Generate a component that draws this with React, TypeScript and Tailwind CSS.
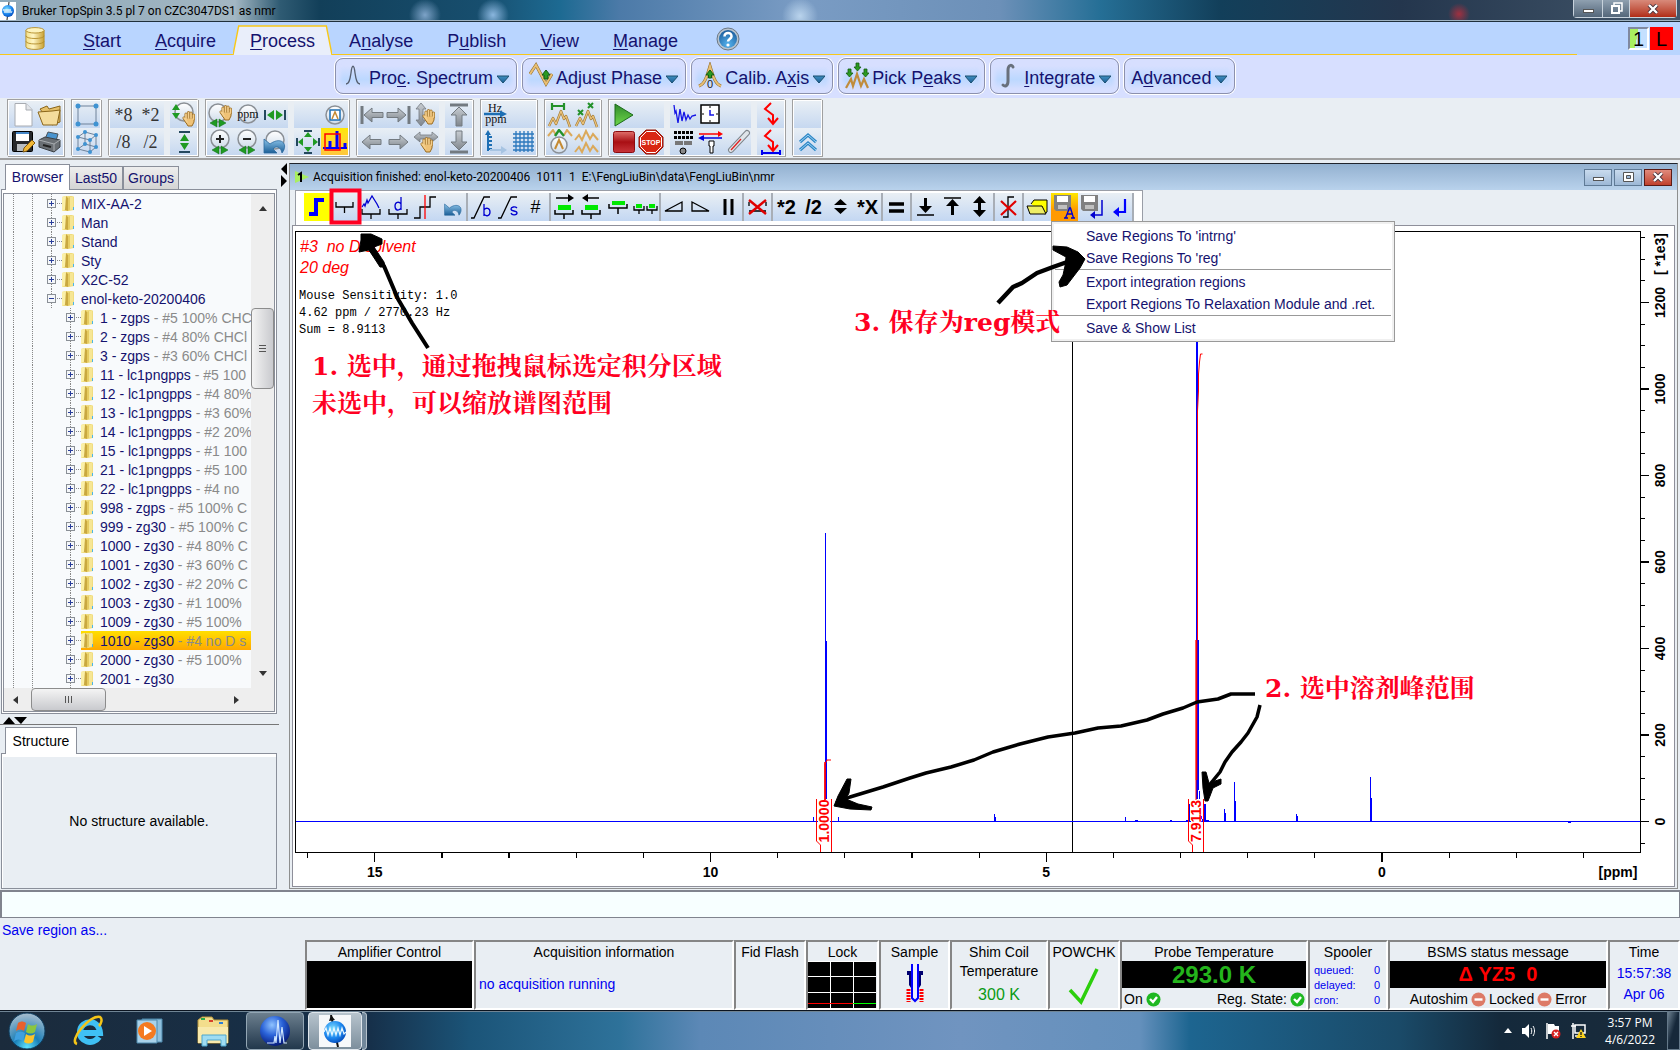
import type { ReactNode } from "react";
import clsx from "clsx";

const Svg = ({ children, w = 26, h = 26 }: any) => (
  <svg width={w} height={h} viewBox={`0 0 ${w} ${h}`} fill="none" className="shrink-0">
    {children}
  </svg>
);

const Defs = () => (
  <svg width="0" height="0" className="absolute" aria-hidden="true">
    <defs>
      <linearGradient id="gold" x1="0" x2="1" y1="0" y2="0">
        <stop offset="0" stopColor="#f3e08a" />
        <stop offset="0.4" stopColor="#fff6c4" />
        <stop offset="1" stopColor="#c9a133" />
      </linearGradient>
      <linearGradient id="lens" x1="0" x2="0" y1="0" y2="1">
        <stop offset="0" stopColor="#ffffff" />
        <stop offset="1" stopColor="#cfdcea" />
      </linearGradient>
      <linearGradient id="steel" x1="0" x2="0" y1="0" y2="1">
        <stop offset="0" stopColor="#c8cdd2" />
        <stop offset="1" stopColor="#7f868d" />
      </linearGradient>
      <linearGradient id="blueArrow" x1="0" x2="0" y1="0" y2="1">
        <stop offset="0" stopColor="#8cc4ea" />
        <stop offset="1" stopColor="#1c5f97" />
      </linearGradient>
      <linearGradient id="caret" x1="0" x2="0" y1="0" y2="1">
        <stop offset="0" stopColor="#3d8fc0" />
        <stop offset="1" stopColor="#1c5f97" />
      </linearGradient>
      <linearGradient id="playGreen" x1="0" x2="0" y1="0" y2="1">
        <stop offset="0" stopColor="#2f8a2c" />
        <stop offset="1" stopColor="#6fd84b" />
      </linearGradient>
      <linearGradient id="stopRed" x1="0" x2="0" y1="0" y2="1">
        <stop offset="0" stopColor="#e0706c" />
        <stop offset="0.5" stopColor="#a90f14" />
        <stop offset="1" stopColor="#c8353a" />
      </linearGradient>
      <radialGradient id="ball" cx="0.4" cy="0.3" r="0.7">
        <stop offset="0" stopColor="#8fc3ff" />
        <stop offset="0.5" stopColor="#2a62d8" />
        <stop offset="1" stopColor="#071d7c" />
      </radialGradient>
      <radialGradient id="cyanBall" cx="0.4" cy="0.35" r="0.7">
        <stop offset="0" stopColor="#7fe0ff" />
        <stop offset="0.6" stopColor="#1c86ee" />
        <stop offset="1" stopColor="#0448b8" />
      </radialGradient>
      <radialGradient id="help" cx="0.5" cy="0.8" r="0.8">
        <stop offset="0" stopColor="#56b4ee" />
        <stop offset="1" stopColor="#1b5c9c" />
      </radialGradient>
      <radialGradient id="orb" cx="0.5" cy="0.95" r="0.9">
        <stop offset="0" stopColor="#5fe4ff" />
        <stop offset="0.4" stopColor="#1a7fb8" />
        <stop offset="1" stopColor="#9fb9cc" />
      </radialGradient>
    </defs>
  </svg>
);

const Hand = ({ x, y }: { x: number; y: number }) => (
  <g transform={`translate(${x} ${y})`} strokeLinecap="round" strokeLinejoin="round">
    <path d="M3 8V3M5.500 7V1.500M8 7V2M10.500 8V4M1 7l3 4" stroke="#9a6c22" strokeWidth="3" />
    <path d="M3 7h8v4l-2 4H5l-3-5z" fill="#efc277" stroke="#9a6c22" />
    <path d="M3 8V3M5.500 7V1.500M8 7V2M10.500 8V4M1 7l3 4" stroke="#f4cf8d" strokeWidth="1.700" />
  </g>
);
const Lens = ({ cx = 12, cy = 12, r = 8 }) => (
  <circle cx={cx} cy={cy} r={r} fill="url(#lens)" stroke="#8b9096" strokeWidth="1.500" />
);
const GreenH = ({ x = 12, y = 22 }) => (
  <path d={`M${x - 1} ${y - 4}v8l-7-4zM${x + 1} ${y - 4}v8l7-4z`} fill="#1f9a22" stroke="#0f6a14" strokeWidth="0.500" />
);
const SteelArrow = ({ t = "" }) => (
  <path d="M2 13l8-7v4.500h11v5H10V20z" transform={t} fill="url(#steel)" stroke="#737a80" />
);
const Zigzag = ({ y = 0 }) => (
  <g strokeLinejoin="round">
    <path d={`M2 ${22 + y}l4-8 3 6 5-13 3 8 2-3 4 11`} stroke="#9c7430" strokeWidth="2.400" />
    <path d={`M2 ${22 + y}l4-8 3 6 5-13 3 8 2-3 4 11`} stroke="#eac27a" strokeWidth="1.300" />
  </g>
);

const NewFile = () => (
  <Svg>
    <path d="M5 1.500h11l6 6V24H5z" fill="#fff" stroke="#a8acb2" />
    <path d="M16 1.500V8h6" fill="#e3e6ea" stroke="#a8acb2" />
  </Svg>
);
const OpenFile = () => (
  <Svg>
    <path d="M3 7l7-3 2 3 11-3v16l-8 3z" fill="#e5c069" stroke="#8a6519" />
    <path d="M1 10l14-1 8-1-3 15-14 0z" fill="#f4dc9c" stroke="#8a6519" />
  </Svg>
);
const SaveFile = () => (
  <Svg>
    <rect x="2.500" y="2.500" width="20" height="20" rx="1" fill="#25282c" stroke="#000" />
    <rect x="6" y="3" width="13" height="9" fill="#fff" />
    <path d="M6 4h13" stroke="#4587c8" strokeWidth="2" />
    <rect x="7" y="15" width="10" height="7" fill="#b8bdc2" />
    <path d="M13 23l1-4 8-8 3 3-8 8z" fill="#f0b838" stroke="#7d5712" />
  </Svg>
);
const Print = () => (
  <Svg>
    <path d="M8 10l3-7 10 2-2 7z" fill="#4994cf" stroke="#4c5359" />
    <path d="M2 11l6-3 15 3v7l-6 5-15-5z" fill="#6a6f74" stroke="#3c4044" />
    <path d="M2 11l15 4 6-4M17 15v7" stroke="#a9adb1" />
    <path d="M6 16l8 2" stroke="#222" strokeWidth="2" />
  </Svg>
);
const Square2D = () => (
  <Svg>
    <rect x="4" y="4" width="18" height="18" stroke="#6e8299" />
    {[[4, 4], [22, 4], [4, 22], [22, 22]].map(([x, y]) => (
      <circle key={`${x}-${y}`} cx={x} cy={y} r="2.500" fill="#3f93d2" />
    ))}
  </Svg>
);
const Cube3D = () => (
  <Svg>
    <path d="M4 8l12 3v12L4 20zM4 8l7-5 11 3-6 5M22 6v12l-6 5M11 3v12l11 3M11 15l-7 5" stroke="#6e8299" />
    {[[4, 8], [16, 11], [16, 23], [4, 20], [11, 3], [22, 6], [22, 18], [11, 15]].map(([x, y]) => (
      <circle key={`${x}-${y}`} cx={x} cy={y} r="2" fill="#3f93d2" />
    ))}
  </Svg>
);
const HandScale = () => (
  <Svg>
    <Lens cx={13} cy={10} r={9} />
    <path d="M1 8h8L5 2zM1 11h8l-4 6z" fill="#1f9a22" />
    <Hand x={12} y={9} />
  </Svg>
);
const FitV = () => (
  <Svg>
    <path d="M8 3h11M8 23h11" stroke="#24485e" strokeWidth="2" />
    <path d="M9 12h9l-4.500-7zM9 14h9l-4.500 7z" fill="#1f9a22" />
  </Svg>
);
const LensHand = () => (
  <Svg>
    <Lens cx={10} cy={11} r={9} />
    <GreenH x={10} y={21} />
    <Hand x={12} y={3} />
  </Svg>
);
const LensPpm = () => (
  <Svg>
    <Lens cx={13} cy={12} r={9} />
    <text x="13" y="16" textAnchor="middle" fontSize="12" fill="#111" fontFamily="Liberation Serif, serif">ppm</text>
  </Svg>
);
const FitH = () => (
  <Svg>
    <path d="M3 8v10M23 8v10" stroke="#24485e" strokeWidth="2" />
    <path d="M12 8v10l-7-5zM14 8v10l7-5z" fill="#1f9a22" />
  </Svg>
);
const LensPlus = () => (
  <Svg>
    <Lens cx={12} cy={10} r={9} />
    <path d="M8 10h8M12 6v8" stroke="#222" strokeWidth="2" />
    <GreenH x={12} y={21} />
  </Svg>
);
const LensMinus = () => (
  <Svg>
    <Lens cx={12} cy={10} r={9} />
    <path d="M8 10h8" stroke="#222" strokeWidth="2" />
    <GreenH x={12} y={21} />
  </Svg>
);
const UndoArrow = () => (
  <path d="M2 10v14h13l-4-4c3-4 8-2 9 4 7-9-1-17-12-9z" fill="url(#blueArrow)" stroke="#2b6a9e" strokeWidth="0.800" />
);
const LensUndo = () => (
  <Svg>
    <Lens cx={13} cy={11} r={9} />
    <UndoArrow />
  </Svg>
);
const LensPeak = () => (
  <Svg>
    <Lens cx={13} cy={13} r={9} />
    <rect x="8" y="8" width="10" height="10" fill="#fff" stroke="#1d6fb4" strokeWidth="1.500" />
    <path d="M10 17l3-7 3 7" stroke="#c58b34" strokeWidth="1.500" />
  </Svg>
);
const FitAll = () => (
  <Svg>
    <path d="M9 2h8M9 24h8M2 9v8M24 9v8" stroke="#24485e" strokeWidth="2" />
    <path d="M9 8h8l-4-5zM9 18h8l-4 5zM8 9v8l-5-4zM18 9v8l5-4z" fill="#1f9a22" />
  </Svg>
);
const BarsIcon = () => (
  <Svg>
    <path d="M1 19h24" stroke="#0000ff" strokeWidth="2" />
    <path d="M8 19v-7M15 19V2M23 19v-5" stroke="#0000ff" strokeWidth="3" />
    <rect x="3" y="5" width="15" height="16" stroke="#ff0000" strokeWidth="1.500" />
  </Svg>
);
const ArrowLeftEnd = () => (
  <Svg>
    <path d="M3 4v18" stroke="#737a80" strokeWidth="3" />
    <SteelArrow t="translate(3 0)" />
  </Svg>
);
const ArrowRightEnd = () => (
  <Svg>
    <path d="M23 4v18" stroke="#737a80" strokeWidth="3" />
    <SteelArrow t="translate(22 0) scale(-1 1)" />
  </Svg>
);
const ArrowLeft = () => (
  <Svg>
    <SteelArrow t="translate(1 0)" />
  </Svg>
);
const ArrowRight = () => (
  <Svg>
    <SteelArrow t="translate(24 0) scale(-1 1)" />
  </Svg>
);
const HandV = () => (
  <Svg>
    <path d="M8 1l5 6h-3v11h3l-5 6-5-6h3V7H3z" fill="url(#steel)" stroke="#737a80" strokeWidth="0.800" />
    <Hand x={10} y={7} />
  </Svg>
);
const HandH = () => (
  <Svg>
    <path d="M1 8l6-5v3h12V3l6 5-6 5v-3H7v3z" fill="url(#steel)" stroke="#737a80" strokeWidth="0.800" />
    <Hand x={8} y={8} />
  </Svg>
);
const ArrowUpEnd = () => (
  <Svg>
    <path d="M4 3h18" stroke="#737a80" strokeWidth="3" />
    <path d="M13 5l8 8h-5v11h-6V13H5z" fill="url(#steel)" stroke="#737a80" />
  </Svg>
);
const ArrowDownEnd = () => (
  <Svg>
    <path d="M4 23h18" stroke="#737a80" strokeWidth="3" />
    <path d="M13 21l8-8h-5V2h-6v11H5z" fill="url(#steel)" stroke="#737a80" />
  </Svg>
);
const HzPpm = () => (
  <Svg>
    <text x="12" y="10" textAnchor="middle" fontSize="12" fill="#111" fontFamily="Liberation Serif, serif">Hz</text>
    <path d="M1 12h17" stroke="#1d6fb4" strokeWidth="2.500" />
    <path d="M17 8.500l7 3.500-7 3.500z" fill="#1d6fb4" />
    <text x="13" y="21" textAnchor="middle" fontSize="12" fill="#111" fontFamily="Liberation Serif, serif">ppm</text>
  </Svg>
);
const AxisIcon = () => (
  <Svg>
    <path d="M5 22V4M5 8h4M5 12h4M5 16h4M5 20h4" stroke="#1d6fb4" strokeWidth="2" />
    <path d="M2 6l3-5 3 5z" fill="#1d6fb4" />
    <path d="M7 21h12" stroke="#a7c4e2" strokeWidth="2" />
    <path d="M18 17l6 4-6 4z" fill="#a7c4e2" />
  </Svg>
);
const GridIcon = () => (
  <Svg>
    <path d="M6 2v21M10 2v21M14 2v21M18 2v21M22 2v21M3 5h21M3 9h21M3 13h21M3 17h21M3 21h21" stroke="#2b78bd" strokeWidth="1.300" />
  </Svg>
);
const PeakRange = () => (
  <Svg>
    <path d="M5 1v7M17 1v7M5 4h12" stroke="#23912a" strokeWidth="2.200" />
    <Zigzag y={2} />
  </Svg>
);
const PeakMarks = () => (
  <Svg>
    <path d="M4 8l5 5M9 8l-5 5M14 1l5 5M19 1l-5 5" stroke="#23912a" strokeWidth="2" />
    <Zigzag y={2} />
  </Svg>
);
const PeakLens = () => (
  <Svg>
    <path d="M1 7l5-6 3 5" stroke="#dba95a" strokeWidth="2" />
    <path d="M17 6l3-5 5 6" stroke="#dba95a" strokeWidth="2" />
    <path d="M8 7l4-6 5 6" stroke="#23912a" strokeWidth="2.400" />
    <Lens cx={12} cy={16} r={8} />
    <path d="M8 20l4-9 4 9" stroke="#c58b34" strokeWidth="2" />
  </Svg>
);
const PeakDouble = () => (
  <Svg>
    <path d="M1 11l4-5 3 5 4-9 4 8 3-5 5 6" stroke="#dba95a" strokeWidth="2" />
    <path d="M1 23l4-5 3 5 4-9 4 8 3-5 5 6" stroke="#dba95a" strokeWidth="2" />
  </Svg>
);
const Play = () => (
  <Svg>
    <path d="M4 2l18 11L4 24z" fill="url(#playGreen)" stroke="#1b6b1a" />
  </Svg>
);
const StopSquare = () => (
  <Svg>
    <rect x="2.500" y="2.500" width="21" height="21" rx="2" fill="url(#stopRed)" stroke="#8b0b10" />
  </Svg>
);
const StopSign = () => (
  <Svg>
    <path d="M8 1h10l7 7v10l-7 7H8l-7-7V8z" fill="#d92713" stroke="#8d1408" />
    <path d="M8.500 2.500h9l6 6v9l-6 6h-9l-6-6v-9z" stroke="#fff" />
    <text x="13" y="16" textAnchor="middle" fontSize="7" fontWeight="bold" fill="#fff" fontFamily="Liberation Sans, sans-serif">STOP</text>
  </Svg>
);
const Fid = () => (
  <Svg>
    <path d="M3 3l1 8 1-2 2 12 2-14 2 12 2-9 2 8 2-5 2 4 2-3 4-1" stroke="#1414e6" strokeWidth="1.300" />
  </Svg>
);
const Clock = () => (
  <Svg>
    <rect x="3" y="3" width="18" height="18" fill="#fff" stroke="#000" strokeWidth="1.500" />
    <path d="M12 8v5h4" stroke="#1414e6" strokeWidth="1.500" />
    <path d="M12 4v2M12 18v2M4 12h2M18 12h2" stroke="#000" />
  </Svg>
);
const Keyboard = () => (
  <Svg>
    <path d="M3 3.500h19M3 8.500h19" stroke="#000" strokeWidth="3" strokeDasharray="3 1" />
    <path d="M4 14h8M13 14h8" stroke="#777" strokeWidth="4" />
    <circle cx="12" cy="22" r="3" fill="#888" stroke="#000" />
  </Svg>
);
const Swap = () => (
  <Svg>
    <path d="M5 9h19" stroke="#0000e0" strokeWidth="1.500" />
    <path d="M1 5h20" stroke="#f00" strokeWidth="1.500" />
    <path d="M20 2l5 3-5 3z" fill="#f00" />
    <path d="M6 6L0 9l6 3z" fill="#0000e0" />
    <path d="M11 12h5v5h-1v7h-3v-7h-1z" fill="#fff" stroke="#000" />
  </Svg>
);
const Thermo = () => (
  <Svg>
    <path d="M22 4L6 21" stroke="#7d848b" strokeWidth="6" strokeLinecap="round" />
    <path d="M22 4L6 21" stroke="#dfe4e9" strokeWidth="4" strokeLinecap="round" />
    <path d="M16 10L6 21" stroke="#e02020" strokeWidth="1.300" />
  </Svg>
);
const RedDown = ({ line = false }) => (
  <Svg>
    <path d="M13 1l-6 6 8 6v8" stroke="#f00" strokeWidth="2" />
    <path d="M10 16l5 6 5-6" stroke="#f00" strokeWidth="2" />
    {line && <path d="M3 24h20M4 21v5M22 21v5" stroke="#0000f0" strokeWidth="2" />}
  </Svg>
);
const ChevronsUp = () => (
  <Svg>
    <path d="M5 13l8-7 8 7M5 21l8-7 8 7" stroke="#2b86c6" strokeWidth="3" />
    <path d="M5 13l8-7 8 7M5 21l8-7 8 7" stroke="#9fd3f2" strokeWidth="1" />
  </Svg>
);

const scale = (s: string) => <span className="font-['Liberation_Serif',serif] text-lg text-[#333]">{s}</span>;

// each group is a list of blocks, each block a top and a bottom row of [label, icon]
type Tool = [string, ReactNode] | null;
const toolGroups: Tool[][][][] = [
  [[[["New", <NewFile />], ["Open", <OpenFile />]], [["Save", <SaveFile />], ["Print", <Print />]]]],
  [[[["2D", <Square2D />]], [["3D", <Cube3D />]]]],
  [
    [[["Times 8", scale("*8")], ["Times 2", scale("*2")]], [["Divide by 8", scale("/8")], ["Divide by 2", scale("/2")]]],
    [[["Scale", <HandScale />]], [["Fit vertically", <FitV />]]],
  ],
  [
    [
      [["Zoom", <LensHand />], ["Exact zoom", <LensPpm />], ["Full width", <FitH />]],
      [["Zoom in", <LensPlus />], ["Zoom out", <LensMinus />], ["Undo zoom", <LensUndo />]],
    ],
    [[null, ["Overview", <LensPeak />]], [["Full size", <FitAll />], ["Keep region", <BarsIcon />]]],
  ],
  [
    [
      [["Left edge", <ArrowLeftEnd />], ["Right edge", <ArrowRightEnd />], ["Drag vertically", <HandV />]],
      [["Left", <ArrowLeft />], ["Right", <ArrowRight />], ["Drag horizontally", <HandH />]],
    ],
    [[["Top", <ArrowUpEnd />]], [["Bottom", <ArrowDownEnd />]]],
  ],
  [[[["Units", <HzPpm />], null], [["Axis", <AxisIcon />], ["Grid", <GridIcon />]]]],
  [[[["Peak range", <PeakRange />], ["Peak marks", <PeakMarks />]], [["Peak zoom", <PeakLens />], ["Multiple display", <PeakDouble />]]]],
  [
    [[["Run", <Play />], null], [["Halt", <StopSquare />], ["Stop", <StopSign />]]],
    [
      [["Fid", <Fid />], ["Clock", <Clock />], null],
      [["Bsms", <Keyboard />], ["Sample changer", <Swap />], ["Temperature", <Thermo />]],
    ],
    [[["Inject", <RedDown />]], [["Eject", <RedDown line />]]],
  ],
  [[[null], [["Collapse", <ChevronsUp />]]]],
];

const MainToolbar = () => (
  <div className="flex gap-[7px] h-[60px] pt-px pl-[7px] bg-[#e9eef3]">
    {toolGroups.map((blocks, g) => (
      <div key={g} className="flex gap-[6px] h-[57px] border border-[#a0a0a0] border-b-white border-r-white bg-[#e9eef3] pt-px pl-px shadow-[inset_1px_1px_0_white,1px_1px_0_#a0a0a0]">
        {blocks.map((rows, b) => (
          <div key={b}>
            {rows.map((row, r) => (
              <div key={r} className="flex h-[27px] bg-linear-to-b from-[#e9eff5] to-[#c6d8f0]">
                {row.map((tool, t) =>
                  tool ? (
                    <button
                      key={t}
                      aria-label={tool[0]}
                      className={clsx(
                        "flex w-[27px] h-[27px] items-center justify-center",
                        tool[0] === "Keep region" && "bg-linear-to-b from-[#ffe600] to-[#ffc83c]"
                      )}
                    >
                      {tool[1]}
                    </button>
                  ) : (
                    <span key={t} className="w-[27px]" />
                  )
                )}
              </div>
            ))}
          </div>
        ))}
      </div>
    ))}
  </div>
);

const TitleBar = () => (
  <header className="relative flex h-[22px] items-center border-b border-[#20303c] shadow-[inset_0_-1px_0_#9fb3c2] bg-[radial-gradient(circle_at_425px_15px,#7da3c8_0,transparent_16px),radial-gradient(circle_at_493px_15px,#8ab6de_0,transparent_16px),radial-gradient(circle_at_800px_16px,#b9d3ec_0,transparent_18px),radial-gradient(circle_at_1459px_14px,#a03040_0,transparent_11px),linear-gradient(90deg,#8fa9ba_0,#a3b7c3_235px,#2f5b73_280px,#123f59_320px,#174e6e_480px,#1d6a92_560px,#4c7aa8_620px,#7a9cc4_800px,#6c90b8_1000px,#256f96_1100px,#123f5a_1220px,#24364d_1400px,#42566a_100%)]">
    <svg width="16" height="18" viewBox="0 0 16 18" className="bg-white">
      <path d="M9 0L7 18" stroke="#222" />
      <circle cx="8" cy="9" r="6" fill="url(#cyanBall)" />
      <path d="M3 9l1-2 1 4 1-4 1 4 1-4 1 4 1-4 1 4 1-2" stroke="#fff" strokeWidth="0.700" fill="none" />
    </svg>
    <h1 className="pl-[6px] font-['Roboto',sans-serif] text-xs text-black">Bruker TopSpin 3.5 pl 7 on CZC3047DS1 as nmr</h1>
    <div className="ml-auto mr-[3px] flex self-start h-[18px] rounded-b border border-t-0 border-[#c7d2dc]">
      <button aria-label="Minimize" className="w-[29px] flex items-end justify-center pb-[4px] bg-linear-to-b from-[#8fa0b0] to-[#54677a] border-r border-[#c7d2dc]">
        <span className="w-[11px] h-[4px] bg-white border border-[#555]" />
      </button>
      <button aria-label="Restore" className="w-[27px] flex items-center justify-center bg-linear-to-b from-[#8fa0b0] to-[#54677a] border-r border-[#c7d2dc]">
        <svg width="13" height="13" viewBox="0 0 13 13" fill="none">
          <path d="M4 3V1h8v8h-2" stroke="#fff" strokeWidth="1.500" />
          <rect x="2" y="4" width="7" height="7" stroke="#fff" strokeWidth="2" />
        </svg>
      </button>
      <button aria-label="Close" className="w-[46px] flex items-center justify-center bg-linear-to-b from-[#d88a7a] to-[#b02a14]">
        <CloseX />
      </button>
    </div>
  </header>
);

const CloseX = () => (
  <svg width="12" height="10" viewBox="0 0 12 10" fill="none">
    <path d="M2 1l8 8M10 1L2 9" stroke="#45303a" strokeWidth="4" />
    <path d="M2 1l8 8M10 1L2 9" stroke="#fff" strokeWidth="2.400" />
  </svg>
);

const menus = [["", "S", "tart"], ["", "A", "cquire"], ["", "P", "rocess"], ["A", "n", "alyse"], ["P", "u", "blish"], ["", "V", "iew"], ["", "M", "anage"]];

const MenuBar = () => (
  <nav className="flex h-[33px] bg-[#b9d5ff] text-lg text-[#15126e]">
    <div className="flex flex-1 border-b border-[#f8c818]">
      <button aria-label="Data" className="ml-[25px] w-[20px] pt-px">
        <svg width="20" height="25" viewBox="0 0 22 26">
          <path d="M1 4v18c0 4 20 4 20 0V4" fill="url(#gold)" stroke="#b38d2a" />
          <ellipse cx="11" cy="4" rx="10" ry="3" fill="#fdf3bd" stroke="#b38d2a" />
          <path d="M1 10c0 4 20 4 20 0M1 16c0 4 20 4 20 0" fill="none" stroke="#b38d2a" />
        </svg>
      </button>
      <div className="flex pl-[21px]">
        {menus.map(([a, u, b]) => (
          <button key={u + b} className="relative px-[17px] pt-[5px]">
            {b === "rocess" && (
              <svg className="absolute inset-x-0 -bottom-px h-[30px] w-full" viewBox="0 0 105 30" preserveAspectRatio="none">
                <path d="M0 30L6 1h93l6 29" fill="#e9eefa" stroke="#f8c818" strokeWidth="1.500" />
              </svg>
            )}
            <span className="relative">
              {a}
              <u className="underline-offset-2">{u}</u>
              {b}
            </span>
          </button>
        ))}
      </div>
      <button aria-label="Help" className="ml-[21px] pt-px">
        <svg width="24" height="24" viewBox="0 0 24 24">
          <circle cx="12" cy="12" r="11" fill="#b7c3cf" stroke="#6c7884" />
          <circle cx="12" cy="12" r="9" fill="url(#help)" />
          <path d="M8.500 9.500c0-5 7.500-4.500 7 0-.3 2.500-3.500 2.500-3.500 5" fill="none" stroke="#fff" strokeWidth="2.500" />
          <circle cx="12" cy="18" r="1.600" fill="#fff" />
        </svg>
      </button>
    </div>
    <div className="flex w-[103px] items-center justify-end gap-px pr-[7px] text-xl text-black">
      <span className="flex h-[23px] w-[21px] items-center justify-center border-2 border-[#8089a0] border-b-white border-r-white bg-[linear-gradient(100deg,#a9ef60_0,#a9ef60_40%,#c4e0ff_42%)]">1</span>
      <span className="flex h-[23px] w-[23px] items-center justify-center bg-[#ff0000]">L</span>
    </div>
  </nav>
);

const actions: [string, string, string, ReactNode][] = [
  ["Pro", "c", ". Spectrum", <Svg w={24} h={28}><path d="M4 22c3 0 4-4 5-11 1-9 3-9 4 0 1 7 2 11 5 11" stroke="#555f70" strokeWidth="1.300" /></Svg>],
  ["Ad", "j", "ust Phase", <Svg w={24} h={28}>
    <path d="M1 12l6-9 10 19 6-10" stroke="#8e6a28" strokeWidth="3" />
    <path d="M1 12l6-9 10 19 6-10" stroke="#e9bf74" strokeWidth="2" />
    <path d="M17 8l4 5h-2v4h-4v-4h-2z" fill="#2a9a22" stroke="#145c12" />
  </Svg>],
  ["Calib. A", "x", "is", <Svg w={24} h={28}>
    <path d="M1 24c6-2 8-10 11-20 3 10 5 18 11 20" stroke="#8e6a28" strokeWidth="3" />
    <path d="M1 24c6-2 8-10 11-20 3 10 5 18 11 20" stroke="#e9bf74" strokeWidth="2" />
    <path d="M12 8l4 5h-2.500v3h-3v-3H8z" fill="#2a9a22" stroke="#145c12" />
    <text x="12" y="26" textAnchor="middle" fontSize="11" fill="#222">0</text>
  </Svg>],
  ["Pick P", "e", "aks", <Svg w={24} h={28}>
    <path d="M1 26l5-9 2 7 4-12 4 12 3-7 4 9" stroke="#c08c3c" strokeWidth="2.200" />
    {[[4, 9], [12, 3], [20, 9]].map(([x, y]) => (
      <path key={x} d={`M${x - 1} ${y - 2}h3v4h2l-3.500 4-3.500-4h2z`} fill="#2a9a22" stroke="#145c12" strokeWidth="0.800" />
    ))}
  </Svg>],
  ["", "I", "ntegrate", <Svg w={24} h={28}><path d="M16 5c-1-3-5-2-5 3v11c0 5-3 6-5 4" stroke="#68707c" strokeWidth="3" strokeLinecap="round" /></Svg>],
  ["A", "d", "vanced", null],
];

const ActionBar = () => (
  <div className="flex h-[43px] gap-[5px] bg-[#d7dfff] pl-[335px] pt-[3px] text-lg text-[#15126e]">
    {actions.map(([a, u, b, icon]) => (
      <button key={b} className="flex h-[36px] items-center whitespace-nowrap rounded-lg border border-[#8c91ad] bg-[linear-gradient(180deg,#d7dfff_20%,#bcd8ff_60%,#d7dfff_92%)] px-[6px] shadow-[0_0_0_1px_white,inset_0_0_4px_4px_#d7dfff]">
        {icon && <span className="mr-[3px]">{icon}</span>}
        <span className="pt-[3px]">
          {a}
          <u className="underline-offset-2">{u}</u>
          {b}
        </span>
        <svg width="12" height="8" viewBox="0 0 12 8" className="ml-[4px] mr-px mt-[5px]">
          <path d="M0 1h12L6 8z" fill="url(#caret)" stroke="#1a4f6e" />
        </svg>
      </button>
    ))}
  </div>
);

const folders = ["MIX-AA-2", "Man", "Stand", "Sty", "X2C-52", "enol-keto-20200406"];
const experiments = [
  ["1 - zgps", "#5 100% CHC"],
  ["2 - zgps", "#4 80% CHCl"],
  ["3 - zgps", "#3 60% CHCl"],
  ["11 - lc1pngpps", "#5 100"],
  ["12 - lc1pngpps", "#4 80%"],
  ["13 - lc1pngpps", "#3 60%"],
  ["14 - lc1pngpps", "#2 20%"],
  ["15 - lc1pngpps", "#1 100"],
  ["21 - lc1pngpps", "#5 100"],
  ["22 - lc1pngpps", "#4 no"],
  ["998 - zgps", "#5 100% C"],
  ["999 - zg30", "#5 100% C"],
  ["1000 - zg30", "#4 80% C"],
  ["1001 - zg30", "#3 60% C"],
  ["1002 - zg30", "#2 20% C"],
  ["1003 - zg30", "#1 100%"],
  ["1009 - zg30", "#5 100%"],
  ["1010 - zg30", "#4 no D s"],
  ["2000 - zg30", "#5 100%"],
  ["2001 - zg30", ""],
];

const Folder = () => (
  <svg width="13" height="17" viewBox="1 0 13 17" className="shrink-0">
    <path d="M1 2l3-1h8l1 1v13l-5 1H1z" fill="#f0dc80" />
    <path d="M1 2l4-1v13l-4 2z" fill="#fbf0a8" />
    <path d="M5 1l2 2v13l-3-1z" fill="#c9a840" />
    <path d="M7 3l4-2v12l-4 3z" fill="#e6cc62" />
    <path d="M9 2l3-1v13l-3 1z" fill="#f6e694" />
    <path d="M12.500 12v3" stroke="#4ab5e8" />
  </svg>
);

const TreeRow = ({ name, note, open, child, selected }: any) => (
  <li className="flex h-[19px] items-stretch whitespace-nowrap pl-[9px]">
    <span className="w-[19px] shrink-0 border-l border-dotted border-[#888]" />
    <span className={clsx("shrink-0 border-l border-dotted border-[#888]", child ? "w-[33px]" : "w-[14px]")} />
    <svg width="16" height="19" viewBox="0 0 16 19" fill="none" className="shrink-0">
      <path d="M5.500 0v19M11 9.500h5" stroke="#888" strokeDasharray="1 1" />
      <rect x="1.500" y="5.500" width="8" height="8" fill="#f5f7fa" stroke="#8a8f96" />
      <path d={open ? "M3 9.500h5" : "M3 9.500h5M5.500 7v5"} stroke="#2a3e9a" />
    </svg>
    <span className={clsx("flex items-center gap-[6px]", selected && "flex-1 bg-linear-to-b from-[#ffdf00] to-[#ffa800]")}>
      <Folder />
      <span className="text-[#15126e]">
        {name}
        {note && <span className="text-[#8a8a8a]"> - {note}</span>}
      </span>
    </span>
  </li>
);

const Browser = () => (
  <aside className="flex w-[279px] shrink-0 flex-col pt-[4px]">
    <div className="flex items-end pl-[5px] text-sm text-[#15126e]">
      <button className="relative z-10 -mb-px h-[26px] w-[65px] border border-b-0 border-[#8a8f9a] bg-white pb-[2px]">Browser</button>
      <button className="h-[23px] w-[53px] border border-l-0 border-b-0 border-[#8a8f9a] bg-linear-to-b from-[#eee] to-[#d4d4d4]">Last50</button>
      <button className="h-[23px] w-[56px] border border-b-0 border-[#8a8f9a] bg-linear-to-b from-[#eee] to-[#d4d4d4]">Groups</button>
    </div>
    <div className="ml-px mr-[2px] border border-[#8a8f9a] bg-white p-px pt-[3px]">
      <div className="border border-[#8a8f9a] bg-[#f8fafc]">
        <div className="flex">
          <ul className="min-w-0 flex-1 overflow-hidden text-sm">
            {folders.map((name) => (
              <TreeRow key={name} name={name} open={name.startsWith("enol")} />
            ))}
            {experiments.map(([name, note]) => (
              <TreeRow key={name} name={name} note={note} child selected={name.startsWith("1010")} />
            ))}
          </ul>
          <div className="flex w-[23px] flex-col items-center bg-[#eeeeee] py-[10px]">
            <Triangle dir="up" />
            <div className="mb-auto mt-[96px] flex h-[81px] w-[23px] flex-col items-center justify-center gap-[2px] rounded-sm border border-[#8c8c8c] bg-linear-to-r from-[#f4f4f4] to-[#c9cace]">
              <span className="h-px w-[7px] bg-[#555]" />
              <span className="h-px w-[7px] bg-[#555]" />
              <span className="h-px w-[7px] bg-[#555]" />
            </div>
            <Triangle dir="down" />
          </div>
        </div>
        <div className="flex h-[23px] items-center bg-[#eeeeee] pl-[8px]">
          <Triangle dir="left" />
          <div className="ml-[11px] flex h-[23px] w-[75px] items-center justify-center gap-[2px] rounded-sm border border-[#8c8c8c] bg-linear-to-b from-[#f4f4f4] to-[#c9cace]">
            <span className="h-[7px] w-px bg-[#555]" />
            <span className="h-[7px] w-px bg-[#555]" />
            <span className="h-[7px] w-px bg-[#555]" />
          </div>
          <span className="ml-auto mr-[34px]">
            <Triangle dir="right" />
          </span>
        </div>
      </div>
    </div>
    <div className="mt-[2px] flex h-[9px] items-center border-b border-[#777] pl-[3px]">
      <svg width="24" height="7" viewBox="0 0 24 7">
        <path d="M0 7h12L6 0zM11 0h13l-6 7z" />
      </svg>
    </div>
    <div className="flex pl-[5px] pt-[2px] text-sm">
      <button className="relative z-10 -mb-px h-[27px] w-[72px] border border-b-0 border-[#8a8f9a] bg-white">Structure</button>
    </div>
    <div className="mb-px ml-px mr-[2px] flex flex-1 items-center justify-center border border-[#8a8f9a] bg-[#e9eef3] text-sm shadow-[inset_0_3px_0_white,inset_1px_0_0_white]">
      No structure available.
    </div>
  </aside>
);

const triangles: Record<string, string> = {
  up: "M0 7l4-5 4 5z",
  down: "M0 1h8L4 6z",
  left: "M6 0v8L1 4z",
  right: "M2 0v8l5-4z",
};
const Triangle = ({ dir }: { dir: string }) => (
  <svg width="8" height="8" viewBox="0 0 8 8">
    <path d={triangles[dir]} fill="#333" />
  </svg>
);

const Label = ({ children, className = "" }: any) => (
  <span className={clsx("font-['Liberation_Sans',sans-serif] font-bold leading-none", className)}>{children}</span>
);
const bracket = "M5 9v5h17V9M13.500 14v6";
const Ic = ({ children }: any) => <Svg w={27} h={28}>{children}</Svg>;
const Disk = () => (
  <>
    <path d="M3 2h17v16H5l-2-2z" fill="#808080" />
    <path d="M6 3h11v6H6z" fill="#fff" />
    <path d="M7 12h9v4H7z" fill="#c0c0c0" />
  </>
);

const intTools: [string, ReactNode][][] = [
  [
    ["Integrate", <Ic><path d="M5 21h7V7h8" stroke="#0000ff" strokeWidth="4" /></Ic>],
    ["Define region", <Ic><path d={bracket} stroke="#000" strokeWidth="1.300" /></Ic>],
    ["Auto regions", <Ic><path d="M4 16v5h18v-5M13 21v5" stroke="#000" strokeWidth="1.300" /><path d="M4 14l2-3 1 2 2-6 1 3 4-7 5 8 2 4" stroke="#0000d0" strokeWidth="1.300" /></Ic>],
    ["Delta", <Ic><path d="M4 16v5h18v-5M13 21v5" stroke="#000" strokeWidth="1.300" /><path d="M16 4v13M16 11c-2-3-6-2-6 2 0 5 4 5 6 2" stroke="#0000d0" strokeWidth="1.300" /></Ic>],
    ["Cut", <Ic><path d="M2 25h6V14h10V4h6" stroke="#000" strokeWidth="1.300" /><path d="M13 2v24" stroke="#f00" strokeWidth="1.300" /></Ic>],
    ["Undo", <Ic><g transform="translate(4 3) scale(0.800)"><UndoArrow /></g></Ic>],
  ],
  [
    ["Bias", <Ic><path d="M3 25h3L16 4h6" stroke="#000" strokeWidth="1.300" /><path d="M16 11v12M16 17c2-3 6-2 6 2s-4 5-6 2" stroke="#0000d0" strokeWidth="1.300" /></Ic>],
    ["Slope", <Ic><path d="M3 25h3L16 4h6" stroke="#000" strokeWidth="1.300" /><path d="M22 15c-2-2-6-1-6 1 0 3 6 1 6 4 0 2-5 3-6 0" stroke="#0000d0" strokeWidth="1.300" /></Ic>],
    ["Number", <span className="text-lg">#</span>],
  ],
  [
    ["Next", <Ic><path d="M5 5h13M4 17v4h18v-4M13 21v5" stroke="#000" strokeWidth="1.500" /><path d="M17 1l6 4-6 4z" fill="#000" /><path d="M7 12h13v5H7z" fill="#00e800" /></Ic>],
    ["Previous", <Ic><path d="M8 5h13M4 17v4h18v-4M13 21v5" stroke="#000" strokeWidth="1.500" /><path d="M10 1L4 5l6 4z" fill="#000" /><path d="M7 12h13v5H7z" fill="#00e800" /></Ic>],
    ["Region", <Ic><path d="M4 11v4h18v-4M13 15v6" stroke="#000" strokeWidth="1.500" /><path d="M7 8h13v4H7z" fill="#00e800" /></Ic>],
    ["Split region", <Ic><path d="M2 13v4h10v-4M7 17v4M15 13v4h10v-4M20 17v4" stroke="#000" strokeWidth="1.300" /><path d="M4 11h6v4H4zM17 11h6v4h-6z" fill="#00e800" /></Ic>],
  ],
  [
    ["Rising slope", <Ic><path d="M4 18l17-9v9z" stroke="#000" strokeWidth="1.300" /></Ic>],
    ["Falling slope", <Ic><path d="M4 9v9h17z" stroke="#000" strokeWidth="1.300" /></Ic>],
    ["Pause", <Ic><path d="M10 6v16M17 6v16" stroke="#000" strokeWidth="3" /></Ic>],
  ],
  [["Delete regions", <Ic><path d="M5 9v4M22 9v4M5 18h17" stroke="#000" strokeWidth="1.300" /><path d="M5 7l17 14M22 7L5 21" stroke="#e00000" strokeWidth="2.400" /></Ic>]],
  [
    ["Double", <Label className="text-xl">*2</Label>],
    ["Halve", <Label className="text-xl">/2</Label>],
    ["Scale", <Ic><path d="M7 12h13l-6.500-6zM7 15h13l-6.500 6z" fill="#000" /></Ic>],
    ["Scale factor", <Label className="text-xl">*X</Label>],
  ],
  [["Align", <Ic><path d="M6 11h15M6 18h15" stroke="#000" strokeWidth="3.500" /></Ic>]],
  [
    ["Move down", <Ic><path d="M5 22h17" stroke="#000" strokeWidth="1.500" /><path d="M13.500 5v10" stroke="#000" strokeWidth="3" /><path d="M7 13h13l-6.500 7z" fill="#000" /></Ic>],
    ["Move up", <Ic><path d="M5 5h17" stroke="#000" strokeWidth="1.500" /><path d="M13.500 10v12" stroke="#000" strokeWidth="3" /><path d="M7 13h13l-6.500-7z" fill="#000" /></Ic>],
    ["Move", <Ic><path d="M13.500 8v12" stroke="#000" strokeWidth="3" /><path d="M7 10h13l-6.500-7zM7 17h13l-6.500 7z" fill="#000" /></Ic>],
  ],
  [["Delete integral", <Ic><path d="M8 24h5V4h6" stroke="#000" strokeWidth="1.300" /><path d="M6 8l15 14M21 8L6 22" stroke="#e00000" strokeWidth="2.200" /></Ic>]],
  [
    ["Read regions", <Ic><path d="M7 11l3-4h13v12l-3 2" fill="#ffff00" stroke="#000" /><path d="M3 13h15l4 8H6z" fill="#eeee66" stroke="#000" /></Ic>],
    ["Save regions as", <Ic><Disk /><path d="M13 25h4M20 25h4M14.500 25l4-10h1l3 10M16 21h6" stroke="#0000d0" strokeWidth="1.300" /></Ic>],
    ["Save and return", <Ic><Disk /><path d="M24 7v15h-9" stroke="#0000d0" strokeWidth="1.500" /><path d="M17 18l-5 4 5 4z" fill="#0000d0" /></Ic>],
    ["Return", <Ic><path d="M20 6v13h-7" stroke="#0000ff" strokeWidth="2.200" /><path d="M14 14l-6 5 6 5z" fill="#0000ff" /></Ic>],
  ],
];

const SaveMenu = () => (
  <div role="menu" className="absolute left-0 top-full z-10 w-max border border-[#999] bg-white p-px pb-[2px] text-left text-sm text-[#15126e] shadow-[inset_0_0_0_2px_#f0f0f0]">
    <div className="px-[2px] pt-[2px]">
      <MenuItem>Save Regions To 'intrng'</MenuItem>
      <MenuItem>Save Regions To 'reg'</MenuItem>
      <hr className="mb-px border-[#999]" />
      <MenuItem>Export integration regions</MenuItem>
      <MenuItem>Export Regions To Relaxation Module and .ret.</MenuItem>
      <hr className="mb-px border-[#999]" />
      <MenuItem>Save &amp; Show List</MenuItem>
    </div>
  </div>
);
const MenuItem = ({ children }: any) => (
  <button role="menuitem" className="block h-[22px] w-full pl-[31px] pr-[16px] text-left leading-5">{children}</button>
);

const IntegrationToolbar = () => (
  <div className="relative ml-[3px] -mb-px flex h-[36px] w-fit border border-b-0 border-[#999da6] bg-white pl-[8px] pr-[8px] pt-[2px]">
    {intTools.map((group, g) => (
      <div key={g} className="flex h-[28px] border-r-2 border-[#a8aeb6] bg-linear-to-b from-[#e9eff4] to-[#c3d7f2]">
        {group.map(([label, icon]) => (
          <div key={label} className="relative">
            <button
              aria-label={label}
              className={clsx(
                "flex h-[28px] w-[27px] items-center justify-center whitespace-nowrap text-black",
                label === "Integrate" && "bg-[#ffff00]",
                label === "Save regions as" && "bg-linear-to-b from-[#ffe800] to-[#ff9a00] to-60%"
              )}
            >
              {icon}
            </button>
            {label === "Save regions as" && <SaveMenu />}
          </div>
        ))}
      </div>
    ))}
  </div>
);

const xTicks = Array.from({ length: 20 }, (_, i) => 16 - i);
const yTicks = Array.from({ length: 29 }, (_, i) => i * 50 - 50).filter((v) => v <= 1350);
const xPos = (ppm: number) => 1382 - ppm * 67.15;
const yPos = (v: number) => 821.5 - v * 0.4325;

const Spectrum = () => (
  <svg viewBox="293 226 1381 660" className="block h-auto w-full" fill="none" fontFamily="Liberation Sans, sans-serif">
    <g stroke="#000" strokeWidth="1.200" shapeRendering="crispEdges">
      <path d="M295.500 852.500V231.500H1640.500V852.500Z" />
      {xTicks.map((t) => (
        <path key={t} d={`M${xPos(t)} 852v${t % 5 === 0 ? 10 : 6}`} />
      ))}
      {yTicks.map((t) => (
        <path key={t} d={`M1640 ${yPos(t)}h${t % 200 === 0 ? 9 : 5}`} />
      ))}
      <path d="M1072.500 232v620" />
    </g>
    <g fill="#000" fontSize="14" fontWeight="bold" textAnchor="middle">
      {[15, 10, 5, 0].map((t) => (
        <text key={t} x={xPos(t)} y="877">{t}</text>
      ))}
      <text x="1618" y="877">[ppm]</text>
      {[0, 200, 400, 600, 800, 1000, 1200].map((t) => (
        <text key={t} transform={`translate(1665 ${yPos(t)}) rotate(-90)`}>{t}</text>
      ))}
      <text transform="translate(1665 254) rotate(-90)">[ *1e3]</text>
    </g>
    <g stroke="#0000ff" shapeRendering="crispEdges">
      <path d="M296 821.500H1640" strokeWidth="1.300" />
      <path d="M813.500 821v-4M838.500 821v-4M1125.500 821v-4M1135 820.500h3M1170 820.500h2M1568 822.500h3" />
      <path d="M825.500 821V533M826.500 821V641" />
      <path d="M994.500 821v-7M995.500 821v-4M1224.500 821v-12M1225.500 821v-8M1234.500 821V782M1235.500 821v-20M1296.500 821v-7M1297.500 821v-5M1370.500 821V777M1371.500 821V798" />
      <path d="M1196.500 821V232" strokeWidth="2" />
      <path d="M1198.500 640v140l1 20 1 15 2 5h6M1189.500 821v-17M1186 820h4" />
      <path d="M1205 821v-17" strokeWidth="2" />
    </g>
    <path d="M818 799h12v46h-12zM1191 799h10v46h-10z" fill="#fff" />
    <g stroke="#ff0000">
      <path d="M816.500 799v42l4 4v7M831.500 799v53M825 800v-36l2-4h4" />
      <path d="M825 762v38" strokeWidth="1.600" />
      <path d="M1188.500 799v42l4 4v7M1203.500 799v53" />
      <path d="M1196 800V640M1197.500 640V411l1-20v-17l1-12 1-8h2" />
      <path d="M1196.500 640v140" strokeWidth="1.600" />
    </g>
    <g fill="#ff0000" fontSize="14" fontWeight="bold" textAnchor="middle">
      <text transform="translate(829 821) rotate(-90)">1.0000</text>
      <text transform="translate(1201 821) rotate(-90)">7.9113</text>
    </g>
    <g fill="#ff0000" fontSize="16" fontStyle="italic">
      <text x="300" y="252">#3{"\u00a0 "}no D solvent</text>
      <text x="300" y="273">20 deg</text>
    </g>
    <g fill="#000" fontSize="12" fontFamily="Liberation Mono, monospace">
      <text x="299" y="299">Mouse Sensitivity: 1.0</text>
      <text x="299" y="316">4.62 ppm / 2770.23 Hz</text>
      <text x="299" y="333">Sum = 8.9113</text>
    </g>
  </svg>
);

// hand-drawn notes over the spectrum, same coordinate system as Spectrum
const Notes = () => (
  <svg viewBox="293 226 1381 660" className="pointer-events-none absolute inset-0 z-20 h-full w-full overflow-visible" fill="none">
    <rect x="331.500" y="190.500" width="28" height="32" stroke="#ff0022" strokeWidth="4" />
    <g stroke="#000" strokeWidth="4" strokeLinejoin="round">
      <path d="M428 348L412 323 398 299 384 266 370 249" />
      <path d="M1255 694H1231L1218 699 1197 702 1183 708 1163 714 1147 720 1121 726 1098 728 1075 733 1048 737 1020 744 993 752 974 760 951 767 926 773 910 778 883 787 850 797 836 803" strokeWidth="3.500" />
      <path d="M1260 705L1257 717 1248 733 1241 742 1232 752 1225 762 1220 772 1211 783" strokeWidth="3.500" />
      <path d="M998 303L1013 287 1022 283 1037 273 1053 267 1070 261" strokeWidth="4.500" />
    </g>
    <g fill="#000" stroke="#000" strokeLinejoin="round">
      <path d="M361 234L371 234 382 239 382 244 374 247 384 262 385 267 380 267 369 250 359 252 361 240Z" />
      <path d="M847 779L851 779 849 793 846 799 858 804 872 807 871 810 850 809 834 806 838 796Z" />
      <path d="M1202 772L1206 772 1209 783 1221 779 1221 784 1213 788 1210 796 1208 801 1205 801 1203 788Z" />
      <path d="M1053 246L1067 247 1078 252 1085 259 1080 268 1067 285 1060 287 1059 282 1063 275 1065 266 1066 257 1053 250Z" />
    </g>
    <g fill="#ff0022" fontSize="25" fontWeight="bold" fontFamily="DejaVu Serif, Noto Serif CJK SC, Noto Sans CJK SC, serif">
      <text x="312" y="375">1. 选中，通过拖拽鼠标选定积分区域</text>
      <text x="312" y="412">未选中，可以缩放谱图范围</text>
      <text x="854" y="331">3. 保存为reg模式</text>
      <text x="1265" y="697">2. 选中溶剂峰范围</text>
    </g>
  </svg>
);

const winButton = "flex h-[17px] w-[28px] items-center justify-center border border-[#5f7a96] bg-linear-to-b from-[#c9dbee] to-[#9db8d6]";

const DataWindow = () => (
  <section className="mb-px mr-[2px] mt-[3px] min-w-0 flex-1 border border-[#8e8f8f] border-t-[#20242c] bg-[#e9eef3]">
    <div className="flex h-[26px] items-center bg-linear-to-b from-[#93b1d0] to-[#b9d2ec] pl-[5px] pr-[5px] font-['Roboto',sans-serif] text-xs text-black">
      <svg width="14" height="12" viewBox="0 0 14 12" className="mr-[4px]">
        <path d="M0 0l14 6-14 6z" fill="#a9ef60" />
        <path d="M3 4l3-2v9" stroke="#000" strokeWidth="2" fill="none" />
      </svg>
      <h2 className="whitespace-pre">{"Acquisition finished: enol-keto-20200406  1011  1  E:\\FengLiuBin\\data\\FengLiuBin\\nmr"}</h2>
      <div className="ml-auto flex gap-[2px]">
        <button aria-label="Minimize window" className={winButton}>
          <span className="mt-[4px] h-[4px] w-[11px] border border-[#555] bg-white" />
        </button>
        <button aria-label="Maximize window" className={winButton}>
          <svg width="11" height="10" viewBox="0 0 11 10">
            <path d="M0.500 0.500h10v9h-10z" fill="#fff" stroke="#555" />
            <path d="M3.500 3.500h4v3h-4z" fill="#9db8d6" stroke="#555" />
          </svg>
        </button>
        <button aria-label="Close window" className="flex h-[17px] w-[28px] items-center justify-center border border-[#5b1a14] bg-linear-to-b from-[#e08a7c] to-[#c0402c]">
          <CloseX />
        </button>
      </div>
    </div>
    <div className="px-[2px] pb-px">
      <IntegrationToolbar />
      <div className="relative border border-[#8e8f9a] bg-white">
        <Spectrum />
        <Notes />
      </div>
    </div>
  </section>
);

const Check = () => (
  <svg width="15" height="15" viewBox="0 0 15 15" className="inline-block">
    <circle cx="7.500" cy="7.500" r="7" fill="#1fb822" />
    <path d="M4 7l3 3 4-5" stroke="#fff" strokeWidth="2.400" fill="none" />
  </svg>
);
const Minus = () => (
  <svg width="15" height="15" viewBox="0 0 15 15" className="inline-block">
    <circle cx="7.500" cy="7.500" r="7" fill="#dd7a66" />
    <path d="M3.500 7.500h8" stroke="#fff" strokeWidth="2.400" />
  </svg>
);

const Panel = ({ title, className, children }: any) => (
  <section className={clsx("flex shrink-0 flex-col border-b-2 border-r-2 border-l-2 border-t-2 border-b-white border-r-white border-l-[#858585] border-t-[#858585] text-center", className)}>
    <h3 className="h-[19px] shrink-0 whitespace-nowrap">{title}</h3>
    {children}
  </section>
);

const StatusBar = () => (
  <div className="flex h-[92px] bg-[#e9eef3] text-sm text-black">
    <p className="w-[305px] shrink-0 pl-[2px] pt-[2px] text-[#0000f0]">Save region as...</p>
    <div className="mt-[22px] flex flex-1">
      <Panel title="Amplifier Control" className="w-[169px]">
        <div className="flex-1 bg-black" />
      </Panel>
      <Panel title="Acquisition information" className="w-[260px]">
        <p className="flex-1 pl-[3px] pt-[13px] text-left text-[#0000f0]">no acquisition running</p>
      </Panel>
      <Panel title="Fid Flash" className="w-[72px]" />
      <Panel title="Lock" className="w-[73px]">
        <svg width="68" height="47" viewBox="0 0 68 47" className="bg-black" shapeRendering="crispEdges">
          <path d="M0 .5h68M0 15.500h68M0 31.500h68M22.500 0v47M45.500 0v47" stroke="#fff" />
          <path d="M0 42.500h45" stroke="#ff0000" />
          <path d="M45 42.500h23" stroke="#00ff00" />
        </svg>
      </Panel>
      <Panel title="Sample" className="w-[71px]">
        <svg width="18" height="42" viewBox="0 0 18 42" className="mx-auto mt-[2px]">
          <path d="M1 8h16v4h-2v10l-2 3H5l-2-3V12H1z" fill="#000070" />
          <path d="M6 1v34l3 3 3-3V1z" fill="#eef" />
          <path d="M6 1v34l3 3 3-3V1" fill="none" stroke="#0000ff" strokeWidth="2" />
          <path d="M2.500 26v13M15.500 26v13" stroke="#f00" strokeWidth="4" strokeDasharray="2 1" />
        </svg>
      </Panel>
      <Panel title="Shim Coil" className="w-[98px]">
        <p className="leading-[20px]">Temperature</p>
        <p className="pt-[2px] text-base text-[#0a9a14]">300 K</p>
      </Panel>
      <Panel title="POWCHK" className="w-[72px]">
        <svg width="34" height="40" viewBox="0 0 34 40" className="mx-auto mt-[5px]">
          <path d="M3 24l11 12L30 3" stroke="#2ccf0c" strokeWidth="3.500" fill="none" />
        </svg>
      </Panel>
      <Panel title="Probe Temperature" className="w-[188px]">
        <p className="h-[27px] bg-black text-2xl/[27px] font-bold text-[#24b41c]">293.0 K</p>
        <p className="flex items-center gap-[3px] pl-[2px] pr-px pt-px">
          On <Check /> <span className="ml-auto">Reg. State:</span> <Check />
        </p>
      </Panel>
      <Panel title="Spooler" className="w-[80px]">
        <dl className="grid grid-cols-[1fr_auto] pl-[4px] pr-[6px] pt-[2px] text-left text-[11px]/[15px] text-[#0000f0]">
          <dt>queued:</dt>
          <dd>0</dd>
          <dt>delayed:</dt>
          <dd>0</dd>
          <dt>cron:</dt>
          <dd>0</dd>
        </dl>
      </Panel>
      <Panel title="BSMS status message" className="w-[220px]">
        <p className="h-[27px] whitespace-pre bg-black text-xl/[27px] font-bold text-[#ff0000]">{"Δ YZ5  0"}</p>
        <p className="flex items-center justify-center gap-[3px] pt-px">
          Autoshim <Minus /> Locked <Minus /> Error
        </p>
      </Panel>
      <Panel title="Time" className="min-w-[71px] flex-1">
        <p className="pt-[2px] text-[#0000f0]">15:57:38</p>
        <p className="pt-px text-[#0000f0]">Apr 06</p>
      </Panel>
    </div>
  </div>
);

const Taskbar = () => (
  <footer className="flex h-[41px] items-center border-t border-[#0b1420] bg-[linear-gradient(90deg,#1b2b3c_0,#16304a_370px,#1b5478_470px,#2e729a_620px,#5c88b6_700px,#7094c0_960px,#6490bc_1140px,#1d6590_1190px,#1a4a68_1400px,#14293b_1500px,#1a2b3b_100%)] pb-px shadow-[inset_0_1px_0_#6f8494]">
    <button aria-label="Start menu" className="ml-[8px]">
      <Svg w={38} h={38}>
        <circle cx="19" cy="19" r="18" fill="url(#orb)" stroke="#0d3b5c" />
        <path d="M10 11c3-2 5-2 8 0l-2 8c-3-2-5-2-8 0z" fill="#e8602c" />
        <path d="M20 12c3 2 5 2 9 0l-2 8c-3 2-6 2-9 0z" fill="#8cc63f" />
        <path d="M7 21c3-2 6-2 9 0l-2 8c-3-2-6-2-9 0z" fill="#3fa0e0" transform="translate(1 0)" />
        <path d="M18 22c3 2 5 2 9 0l-2 8c-3 2-6 2-9 0z" fill="#fbc42c" />
      </Svg>
    </button>
    <button aria-label="Internet Explorer" className="ml-[26px]">
      <Svg w={32} h={32}>
        <path d="M27 22c-6 9-20 5-19-6 1-11 19-13 20 2H9" stroke="#3fc0f4" strokeWidth="6" />
        <path d="M5 29C-4 26 18-1 28 2c3 2 1 7-1 9" stroke="#f5c518" strokeWidth="2.500" />
      </Svg>
    </button>
    <button aria-label="Media Player" className="ml-[32px]">
      <Svg w={28} h={28}>
        <path d="M6 2h20v23H6z" fill="#8fc0dd" stroke="#4d88ab" />
        <path d="M1 3h20v23H1z" fill="#a9d2ea" stroke="#4d88ab" />
        <circle cx="11" cy="14" r="9" fill="#f47a20" />
        <path d="M8 9l8 5-8 5z" fill="#fff" />
      </Svg>
    </button>
    <button aria-label="Explorer" className="ml-[32px]">
      <Svg w={34} h={32}>
        <path d="M2 5l4-3h10l2 3h14v23H2z" fill="#f3dd8c" stroke="#b9953b" />
        <path d="M5 4h4" stroke="#2aa84a" strokeWidth="2" />
        <path d="M13 6h4" stroke="#d8402a" strokeWidth="2" />
        <path d="M23 8h4" stroke="#2a7fd8" strokeWidth="2" />
        <path d="M2 12h30v16H2z" fill="#f8e9ac" />
        <path d="M6 31V20h24v11h-5v-6H11v6z" fill="#9fdcf2" stroke="#4fa6cc" />
      </Svg>
    </button>
    <button aria-label="TopSpin launcher" className="ml-[16px] flex h-[38px] w-[58px] items-center justify-center rounded-sm border border-[#93a6b4] bg-linear-to-b from-[#6c7f8e] to-[#22384c]">
      <Svg w={32} h={32}>
        <circle cx="16" cy="16" r="15" fill="url(#ball)" />
        <path d="M8 28h7l1-7 1 7 2-23 2 23 2-16 2 16h3" stroke="#cfe6ff" strokeWidth="1.200" />
      </Svg>
    </button>
    <button aria-label="TopSpin" className="ml-[4px] flex h-[38px] w-[54px] items-center justify-center rounded-sm border border-[#dfe6ec] bg-linear-to-b from-[#b7c4cd] to-[#7d8f9d]">
      <svg width="32" height="32" viewBox="0 0 32 32" fill="none" className="bg-[#f6f8fa]">
        <path d="M12 0l7 32" stroke="#111" strokeWidth="2" />
        <path d="M10 6l2-6 4 5z" fill="#111" />
        <circle cx="16" cy="17" r="11" fill="url(#cyanBall)" />
        <path d="M5 17l2-4 2 7 2-7 2 7 2-7 2 7 2-7 2 7 2-7 2 6 2-2" stroke="#e6f6ff" strokeWidth="1.200" />
      </svg>
    </button>
    <span className="h-[38px] w-[5px] rounded-r-sm border border-l-0 border-[#b5c2cc] bg-[#71879a]" />
    <div className="ml-auto flex items-center gap-[10px]">
      <svg width="8" height="5" viewBox="0 0 8 5"><path d="M0 5h8L4 0z" fill="#fff" /></svg>
      <Svg w={14} h={16}>
        <path d="M0 5h3l4-4v14l-4-4H0z" fill="#fff" />
        <path d="M9 5c1 2 1 4 0 6M11 3c2 3 2 7 0 10" stroke="#fff" />
      </Svg>
      <Svg w={15} h={16}>
        <path d="M1 0v16" stroke="#fff" strokeWidth="1.500" />
        <path d="M2 1h6l1 2h4v8H2z" fill="#fff" />
        <circle cx="10" cy="11" r="4.500" fill="#d81f1f" />
        <path d="M8 9l4 4M12 9l-4 4" stroke="#fff" strokeWidth="1.400" />
      </Svg>
      <Svg w={15} h={16}>
        <rect x="4" y="2" width="10" height="8" stroke="#fff" strokeWidth="1.500" />
        <path d="M2 0v16M0 3h5M4 13h7" stroke="#fff" strokeWidth="1.500" />
        <path d="M10 6l5 9H5z" fill="#fbd21c" />
        <path d="M10 9v3M10 13v1" stroke="#222" strokeWidth="1.400" />
      </Svg>
    </div>
    <div className="ml-[19px] text-center font-['Open_Sans',sans-serif] text-xs/[17px] text-white">
      <p>3:57 PM</p>
      <p>4/6/2022</p>
    </div>
    <button aria-label="Show desktop" className="ml-[12px] h-full w-[13px] border border-[#65798a] bg-linear-to-br from-[#6f8392] to-[#16283a] to-50%" />
  </footer>
);

export default function App() {
  return (
    <div className="flex min-h-screen flex-col overflow-x-hidden bg-[#e9eef3] font-['Liberation_Sans','Noto_Sans_CJK_SC',sans-serif]">
      <Defs />
      <TitleBar />
      <MenuBar />
      <ActionBar />
      <MainToolbar />
      <main className="flex flex-1 border-y-2 border-t-[#a0a0a0] border-b-[#80848e]">
        <Browser />
        <div className="w-[10px] shrink-0 pt-[3px]">
          <svg width="10" height="24" viewBox="0 0 10 24">
            <path d="M8 0v12L2 6zM2 12v12l6-6z" />
          </svg>
        </div>
        <DataWindow />
      </main>
      <input aria-label="Command line" className="h-[26px] w-full border border-t-0 border-l-2 border-[#80848e] bg-[#f7ffff] px-1 text-sm outline-none" />
      <StatusBar />
      <Taskbar />
    </div>
  );
}
